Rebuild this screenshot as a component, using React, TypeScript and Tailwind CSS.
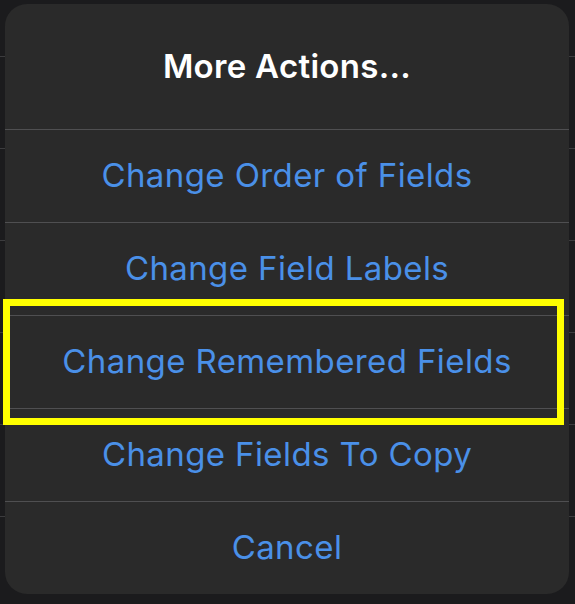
const actions = [
  "Change Order of Fields",
  "Change Field Labels",
  "Change Remembered Fields",
  "Change Fields To Copy",
  "Cancel",
];

const App = () => {
  return (
    <div className="relative w-[575px] h-[604px] overflow-hidden bg-[#1b1b1d] font-['Inter',sans-serif]">
      {/* list rows behind the sheet */}
      <div className="flex flex-col pt-[56px]">
        {[0, 1, 2, 3, 4, 5].map((i) => (
          <div key={i} className="h-[92px] border-t border-[#3c3c3e]"></div>
        ))}
      </div>

      <div className="absolute left-[5px] top-[4px] w-[564px] h-[590px] rounded-[22px] bg-[#2a2a2a] overflow-hidden flex flex-col">
        <div className="h-[125px] flex items-center justify-center pt-[1px]">
          <p className="text-white text-[33px] font-semibold tracking-[0.3px]">More Actions...</p>
        </div>
        {actions.map((label) => (
          <div
            key={label}
            className="h-[93px] border-t border-[#4f4f51] flex items-center justify-center"
          >
            <p className="text-[#4a90e8] text-[33px] tracking-[0.4px]">{label}</p>
          </div>
        ))}
      </div>

      <div className="absolute left-[3px] top-[299px] w-[561px] h-[126px] border-[7px] border-[#ffff00]"></div>
    </div>
  );
};

export default App;
